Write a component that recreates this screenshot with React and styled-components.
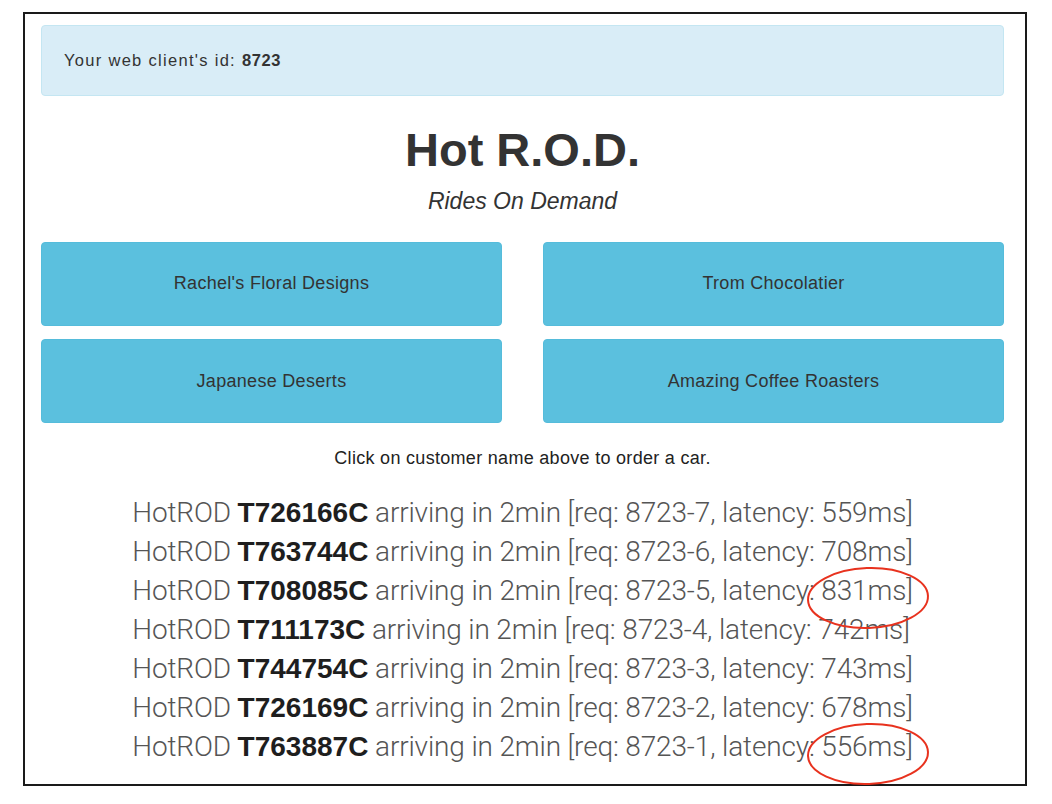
import React from 'react'
import styled, { createGlobalStyle } from 'styled-components'

const GlobalStyle = createGlobalStyle`
    body {
        margin: 0;
        background: #fff;
        font-family: "Liberation Sans", Arial, sans-serif;
    }
`

const Frame = styled.div`
    box-sizing: border-box;
    width: 1004px;
    height: 774px;
    margin: 12px 0 0 23px;
    border: 2px solid #1a1a1a;
    padding: 11px 21px 0 16px;
`

const Alert = styled.div`
    box-sizing: border-box;
    height: 71px;
    display: flex;
    align-items: center;
    padding: 0 22px;
    background: #d9edf7;
    border: 1px solid #c4e6f2;
    border-radius: 4px;
    color: #333;
    font-size: 16.5px;
    letter-spacing: 1.3px;

    b {
        margin-left: 6px;
        letter-spacing: 0.6px;
    }
`

const Title = styled.h1`
    margin: 28px 0 0;
    text-align: center;
    font-size: 47px;
    line-height: 52px;
    font-weight: bold;
    color: #333;
`

const Subtitle = styled.div`
    margin-top: 12px;
    text-align: center;
    font-size: 23px;
    line-height: 26px;
    font-style: italic;
    color: #333;
`

const Customers = styled.div`
    margin-top: 28px;
    display: grid;
    grid-template-columns: 1fr 1fr;
    column-gap: 41px;
    row-gap: 13px;
`

const CustomerButton = styled.button`
    height: 84px;
    border: 1px solid #55bcdb;
    border-radius: 4px;
    background: #5bc0de;
    color: #333;
    font-family: "Liberation Sans", Arial, sans-serif;
    font-size: 18px;
    letter-spacing: 0.3px;
    padding: 0 0 ${props => props.$low ? '0' : '2px'};
    cursor: pointer;
`

const Hint = styled.p`
    margin: 25px 0 0;
    text-align: center;
    font-size: 18px;
    line-height: 20px;
    letter-spacing: 0.3px;
    color: #222;
`

const Rides = styled.div`
    width: fit-content;
    margin: 25px auto 0;
    display: flex;
    flex-direction: column;
`

const Ride = styled.div`
    font-family: Roboto, "Liberation Sans", sans-serif;
    font-weight: 300;
    font-size: 28px;
    line-height: 39px;
    letter-spacing: -0.15px;
    color: #555;
    white-space: nowrap;

    b {
        font-family: "Liberation Sans", Arial, sans-serif;
        font-weight: bold;
        letter-spacing: 0;
        color: #1e1e1e;
    }
`

const Circled = styled.span`
    position: relative;

    svg {
        position: absolute;
        left: -16px;
        top: -8px;
        pointer-events: none;
    }
`

const customers = [
    { name: "Rachel's Floral Designs" },
    { name: 'Trom Chocolatier' },
    { name: 'Japanese Deserts', low: true },
    { name: 'Amazing Coffee Roasters', low: true },
]

const rides = [
    { car: 'T726166C', req: 7, latency: 559 },
    { car: 'T763744C', req: 6, latency: 708 },
    { car: 'T708085C', req: 5, latency: 831, marked: true },
    { car: 'T711173C', req: 4, latency: 742 },
    { car: 'T744754C', req: 3, latency: 743 },
    { car: 'T726169C', req: 2, latency: 678 },
    { car: 'T763887C', req: 1, latency: 556, marked: true },
]

function RedCircle() {
    return (
        <svg width="126" height="64" viewBox="0 0 126 64">
            <ellipse cx="63" cy="32" rx="60" ry="30" fill="none" stroke="#e8321e" strokeWidth="2" transform="rotate(-2 63 32)" />
        </svg>
    )
}

export default function App() {
    return (
        <>
            <GlobalStyle />
            <Frame>
                <Alert>
                    Your web client's id: <b>8723</b>
                </Alert>
                <Title>Hot R.O.D.</Title>
                <Subtitle>Rides On Demand</Subtitle>
                <Customers>
                    {customers.map(c => (
                        <CustomerButton key={c.name} $low={c.low}>{c.name}</CustomerButton>
                    ))}
                </Customers>
                <Hint>Click on customer name above to order a car.</Hint>
                <Rides>
                    {rides.map(r => (
                        <Ride key={r.car}>
                            HotROD <b>{r.car}</b> arriving in 2min [req: 8723-{r.req}, latency:{' '}
                            {r.marked ? (
                                <Circled>{r.latency}ms]<RedCircle /></Circled>
                            ) : (
                                <span>{r.latency}ms]</span>
                            )}
                        </Ride>
                    ))}
                </Rides>
            </Frame>
        </>
    )
}
